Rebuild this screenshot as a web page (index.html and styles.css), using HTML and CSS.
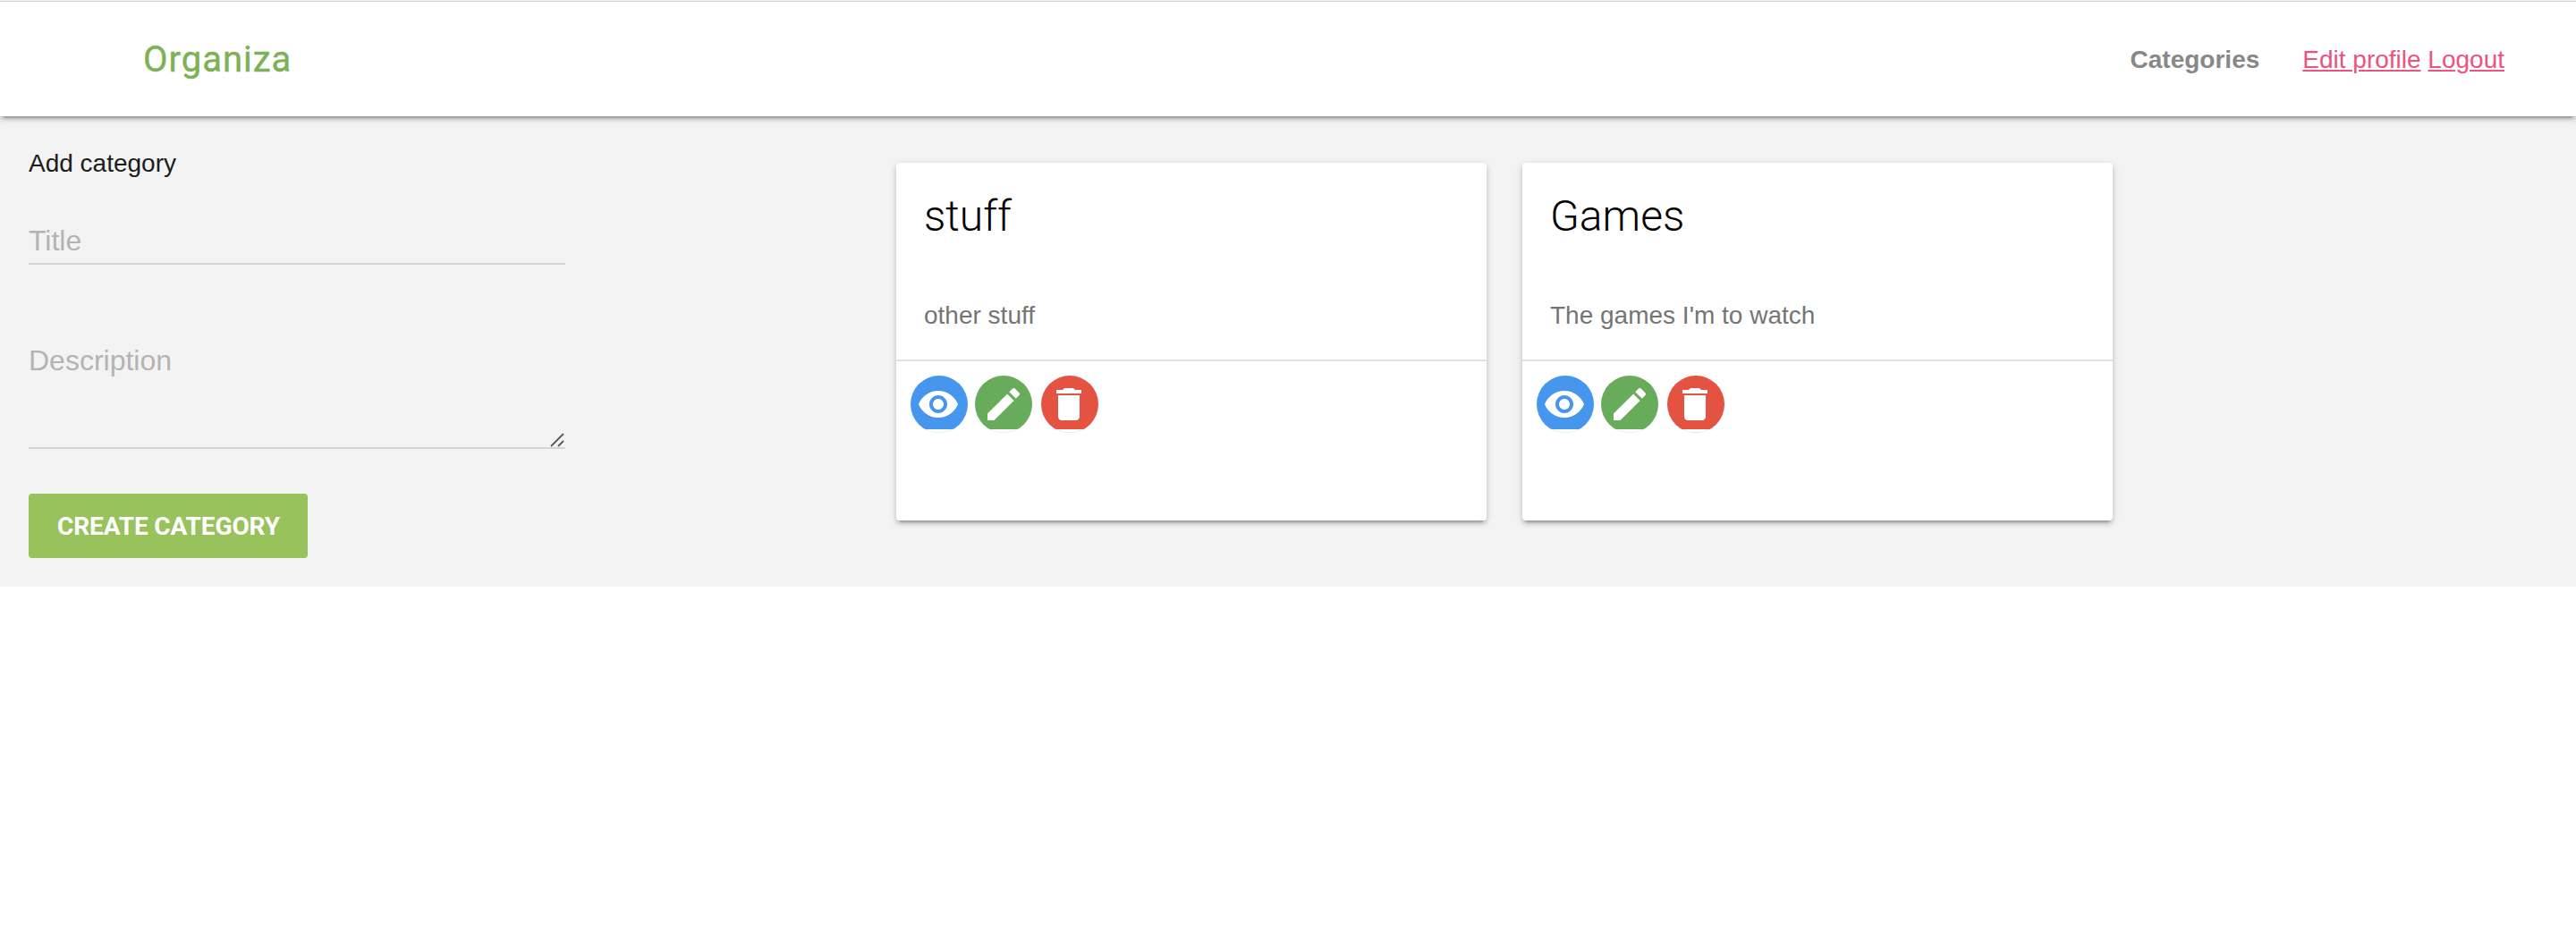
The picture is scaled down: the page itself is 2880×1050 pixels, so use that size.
FILE: index.html
```html
<!DOCTYPE html>
<html lang="en">
<head>
<meta charset="utf-8">
<title>Organiza</title>
<link rel="stylesheet" href="styles.css">
</head>
<body>
<svg class="sprite" aria-hidden="true">
  <symbol id="eye" viewBox="0 0 24 24"><path d="M12 4.500C7 4.500 2.730 7.610 1 12c1.730 4.390 6 7.500 11 7.500s9.270-3.110 11-7.500c-1.730-4.390-6-7.500-11-7.500zM12 17c-2.760 0-5-2.240-5-5s2.240-5 5-5 5 2.240 5 5-2.240 5-5 5zm0-8c-1.660 0-3 1.340-3 3s1.340 3 3 3 3-1.340 3-3-1.340-3-3-3z"/></symbol>
  <symbol id="pencil" viewBox="0 0 24 24"><path d="M3 17.250V21h3.750L17.810 9.940l-3.750-3.750L3 17.250zM20.710 7.040c.39-.39.39-1.020 0-1.410l-2.340-2.340c-.39-.39-1.020-.39-1.410 0l-1.830 1.830 3.750 3.750 1.830-1.830z"/></symbol>
  <symbol id="trash" viewBox="0 0 24 24"><path d="M6 19c0 1.100.9 2 2 2h8c1.100 0 2-.9 2-2V7H6v12zM19 4h-3.500l-1-1h-5l-1 1H5v2h14V4z"/></symbol>
</svg>
<header class="header">
  <span class="brand">Organiza</span>
  <nav class="nav">
    <span class="current">Categories</span>
    <span class="links"><a href="#">Edit profile</a> <a href="#">Logout</a></span>
  </nav>
</header>
<main class="main">
  <form class="form">
    <div class="form-title">Add category</div>
    <label class="field field-title"><span>Title</span></label>
    <label class="field field-description"><span>Description</span>
      <svg class="grip" viewBox="0 0 16 16"><path d="M1 15 15 1M9 15l6-6"/></svg>
    </label>
    <button class="create" type="button">Create category</button>
  </form>
  <section class="cards">
    <article class="card">
      <h2>stuff</h2>
      <p>other stuff</p>
      <div class="actions">
        <a class="action view"><svg><use href="#eye"/></svg></a>
        <a class="action edit"><svg><use href="#pencil"/></svg></a>
        <a class="action delete"><svg><use href="#trash"/></svg></a>
      </div>
    </article>
    <article class="card">
      <h2>Games</h2>
      <p>The games I'm to watch</p>
      <div class="actions">
        <a class="action view"><svg><use href="#eye"/></svg></a>
        <a class="action edit"><svg><use href="#pencil"/></svg></a>
        <a class="action delete"><svg><use href="#trash"/></svg></a>
      </div>
    </article>
  </section>
</main>
</body>
</html>
```
FILE: styles.css
```css
* { box-sizing: border-box; }
body {
  margin: 0;
  border-top: 1px solid #f2f2f2;
  background: #fff;
  color: #1c1c1c;
  font-family: "Liberation Sans", Arial, sans-serif;
  font-size: 28px;
}
.sprite { display: none; }
.header {
  position: relative;
  display: flex;
  justify-content: space-between;
  align-items: center;
  height: 129px;
  padding: 1px 80px 0 160px;
  border-top: 1px solid #d0d0d0;
  background: #fff;
  box-shadow: 0 4px 4px rgba(0,0,0,.14), 0 6px 2px -4px rgba(0,0,0,.2), 0 2px 10px rgba(0,0,0,.12);
}
.brand {
  color: #7cb156;
  font: 400 40px/49px Roboto, sans-serif;
  letter-spacing: 1px;
  -webkit-text-stroke: .4px #7cb156;
}
.nav { display: flex; gap: 48px; line-height: 49px; }
.current { color: #888; font-weight: 700; }
.links a { color: #ed5281; text-decoration-thickness: 2px; text-underline-offset: 2px; }
.main {
  display: flex;
  height: 526px;
  padding: 28px 32px 0;
  background: #f3f3f3;
}
.form { display: flex; flex-direction: column; align-items: flex-start; width: 600px; }
.form-title { line-height: 49px; }
.field {
  display: block;
  position: relative;
  width: 600px;
  border-bottom: 2px solid #d4d4d4;
  color: #b3b3b3;
  font-size: 32px;
  line-height: 48px;
}
.field-title { height: 51px; margin-top: 38px; }
.field-description { height: 123px; margin-top: 83px; }
.grip {
  position: absolute;
  right: 1px;
  bottom: 0;
  width: 16px;
  height: 16px;
  fill: none;
  stroke: #5a5a5a;
  stroke-width: 1.800;
}
.create {
  height: 72px;
  width: 312px;
  margin-top: 50px;
  padding: 1px 0 0 1px;
  border: 0;
  border-radius: 4px;
  background: #97c25c;
  color: #fff;
  font: 700 28px/71px Roboto, sans-serif;
  letter-spacing: -.12px;
  text-transform: uppercase;
}
.cards { display: flex; gap: 40px; margin: 24px 0 0 370px; }
.card {
  width: 660px;
  height: 400px;
  border-radius: 4px;
  background: #fff;
  box-shadow: 0 4px 4px rgba(0,0,0,.14), 0 6px 2px -4px rgba(0,0,0,.2), 0 2px 10px rgba(0,0,0,.12);
}
.card h2 {
  margin: 0;
  padding: 32px 31px 0;
  color: #000;
  font: 300 48px/56px Roboto, sans-serif;
}
.card p {
  margin: 0;
  padding: 58px 31px 25px;
  color: #757575;
  line-height: 49px;
}
.actions {
  display: flex;
  gap: 8px;
  padding: 16px;
  border-top: 2px solid #e3e3e3;
}
.action {
  --tone: #4796ee;
  width: 64px;
  height: 64px;
  padding: 8px 0 0 8px;
  border-radius: 50%;
  background:
    linear-gradient(var(--tone) 60px, transparent 60px),
    radial-gradient(circle, #fff 31px, color-mix(in srgb, var(--tone) 35%, #fff) 32px);
}
.action svg { display: block; width: 48px; height: 48px; fill: #fff; }
.edit { --tone: #68ac5b; }
.delete { --tone: #e45242; margin-left: 2px; }
.view, .delete { padding-left: 7px; }
```
